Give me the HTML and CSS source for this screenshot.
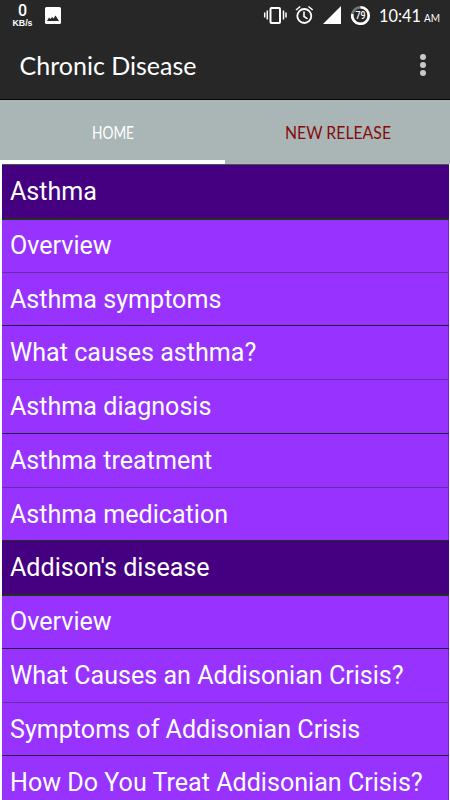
FILE: index.html
```
<!DOCTYPE html>
<html lang="en">
<head>
<meta charset="utf-8">
<title>Chronic Disease</title>
<link rel="stylesheet" href="styles.css">
</head>
<body>
<header class="top">
  <div class="status">
    <div class="speed"><b>0</b><span>KB/s</span></div>
    <svg class="photo" width="16" height="17" viewBox="0 0 16 17"><rect width="16" height="17" rx="1.5" fill="#fff"/><path d="M2 14 4 10.500 5.500 12 7 10 8.500 11.500 10.500 8.500 14 14Z" fill="#272727"/></svg>
    <svg class="icons" width="110" height="24" viewBox="262 3 110 24" fill="none" stroke="#fff">
      <path d="M264.700 12.500v5M267.300 10.500v9M283.500 10.500v9M286 12.500v5" stroke-width="1.500"/>
      <rect x="270.500" y="8" width="9.500" height="15" rx="1" stroke-width="2"/>
      <circle cx="304.300" cy="16" r="7" stroke-width="1.800"/>
      <path d="M304 11.500v5l3.500 2.300M296 10l4.200-3.500M308.500 6.500l4.200 3.500" stroke-width="1.600"/>
      <path d="M323 24 341 6V24Z" fill="#fff" stroke="none"/>
      <circle cx="360.500" cy="15.500" r="8.300" stroke="#777" stroke-width="2.600"/>
      <path d="M360.500 7.200A8.300 8.300 0 1 1 352.300 14" stroke-width="2.600"/>
      <text x="355.500" y="19" textLength="10" lengthAdjust="spacingAndGlyphs" class="level">79</text>
    </svg>
    <svg class="clock" width="64" height="24" viewBox="378 3 64 24" fill="#fff">
      <text x="379" y="21.500" textLength="42" lengthAdjust="spacingAndGlyphs" class="time">10:41</text>
      <text x="424" y="21.500" textLength="16" lengthAdjust="spacingAndGlyphs" class="ampm">AM</text>
    </svg>
  </div>
  <div class="bar">
    <svg width="180" height="40" viewBox="20 46 180 40" fill="#fff"><text x="19.500" y="74.500" textLength="177" lengthAdjust="spacingAndGlyphs" class="title">Chronic Disease</text></svg>
    <div class="dots"><i></i><i></i><i></i></div>
  </div>
</header>
<nav class="tabs">
  <div class="tab active"><svg width="60" height="32"><text x="9" y="23" textLength="42" lengthAdjust="spacingAndGlyphs">HOME</text></svg></div>
  <div class="tab"><svg width="124" height="32"><text x="9" y="23" textLength="106" lengthAdjust="spacingAndGlyphs">NEW RELEASE</text></svg></div>
</nav>
<main class="list">
  <div class="row head first">Asthma</div>
  <div class="row">Overview</div>
  <div class="row soft">Asthma symptoms</div>
  <div class="row">What causes asthma?</div>
  <div class="row soft">Asthma diagnosis</div>
  <div class="row">Asthma treatment</div>
  <div class="row soft">Asthma medication</div>
  <div class="row head">Addison's disease</div>
  <div class="row">Overview</div>
  <div class="row">What Causes an Addisonian Crisis?</div>
  <div class="row soft">Symptoms of Addisonian Crisis</div>
  <div class="row">How Do You Treat Addisonian Crisis?</div>
</main>
</body>
</html>
```
FILE: styles.css
```
* { box-sizing: border-box; }
body { margin: 0; width: 450px; height: 800px; overflow: hidden; background: #fff; font-family: Roboto, sans-serif; display: flex; flex-direction: column; }
svg { display: block; flex: none; overflow: visible; }
.top { height: 100px; flex: none; background: #272727; border-bottom: 1px solid #050505; color: #fff; }
.status { height: 33px; display: flex; align-items: flex-start; padding: 3px 8px 0 11px; }
.speed { width: 23px; display: flex; flex-direction: column; align-items: center; line-height: 1; font-family: "Liberation Sans", sans-serif; }
.speed b { font-family: Roboto, sans-serif; font-size: 16px; line-height: 16px; font-weight: 500; }
.speed span { font-size: 8.800px; line-height: 9px; font-weight: bold; }
.photo { margin: 4px 0 0 11px; }
.icons { margin-left: auto; margin-right: 6px; }
.level { font: 500 10px Roboto, sans-serif; fill: #fff; stroke: none; }
.time { font: 17px Lato, sans-serif; }
.ampm { font: 12px Lato, sans-serif; }
.bar { height: 66px; display: flex; justify-content: space-between; align-items: center; padding: 0 24px 0 20px; }
.title { font: 25px Lato, sans-serif; }
.dots { display: flex; flex-direction: column; gap: 2px; margin-bottom: 2px; }
.dots i { width: 6px; height: 6px; border-radius: 50%; background: #c9c9c9; }
.tabs { height: 64px; flex: none; display: flex; background: #aab6b6; }
.tab { flex: 1; display: flex; align-items: center; justify-content: center; padding-top: 4px; border-bottom: 4px solid transparent; font: 16.500px Lato, sans-serif; fill: #850b0b; }
.active { border-bottom-color: #fff; fill: #fff; }
.list { flex: none; margin: 0 1px 0 2px; }
.row { height: 53.77px; border-top: 1px solid #251348; background: #9832ff; color: #fff; padding-left: 8px; font-size: 25.1px; line-height: 53px; white-space: nowrap; box-shadow: inset -1px 0 #7b1de0; }
.soft { border-top-color: #6a2aa5; }
.head { background: #440081; box-shadow: none; border-top-color: #24301d; }
.head + .row { border-top: 2px solid #24301d; line-height: 51px; }
.first { border-top-color: #4d5252; }
```
